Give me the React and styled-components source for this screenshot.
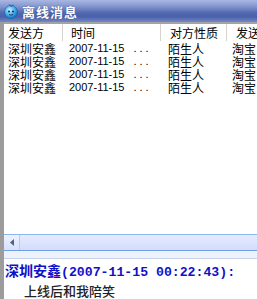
import styled, { createGlobalStyle } from 'styled-components';

const GlobalStyle = createGlobalStyle`
  *, *::before, *::after {
    box-sizing: border-box;
  }
  html, body {
    margin: 0;
    padding: 0;
    background: #fff;
  }
  body {
    font-family: "Noto Sans CJK SC", "Liberation Sans", sans-serif;
  }
`;

const Janela = styled.div`
  width: 257px;
  height: 299px;
  display: flex;
  flex-direction: column;
  overflow: hidden;
  background: #fff;
`;

const BarraTitulo = styled.div`
  height: 22px;
  flex: none;
  display: flex;
  align-items: center;
  gap: 3px;
  padding-left: 3px;
  background: linear-gradient(#a9b7e2 0%, #8597d0 28%, #5269b1 58%, #4961aa 76%, #7587c6 100%);
`;

const TextoTitulo = styled.span`
  color: #fff;
  font-size: 13px;
  font-weight: 700;
  letter-spacing: 1px;
  text-shadow: 0 0 1px #2a3a70;
`;

const Corpo = styled.div`
  flex: 1;
  display: flex;
  flex-direction: column;
  border-left: 4px solid #9c9c9c;
  background: #fff;
  min-height: 0;
`;

const Lista = styled.div`
  flex: 1;
  display: flex;
  flex-direction: column;
  border-top: 2px solid #a3a3a3;
  min-height: 0;
`;

const Linha = styled.div`
  display: grid;
  grid-template-columns: 59px 98px 66px 60px;
  height: ${(p) => (p.$cabecalho ? '17px' : '13px')};
  align-items: center;
  line-height: 13px;
  color: #000;
  white-space: nowrap;
  margin-bottom: ${(p) => (p.$cabecalho ? '1px' : '0')};
`;

const Celula = styled.div`
  padding-left: ${(p) => p.$recuo}px;
  overflow: hidden;
  border-right: ${(p) => (p.$cabecalho ? '1px solid #d6d3ce' : 'none')};
  height: 100%;
  display: flex;
  align-items: center;
  font-family: ${(p) => (p.$numeros ? '"Liberation Sans", sans-serif' : 'inherit')};
  font-size: ${(p) => (p.$numeros ? '11px' : '12px')};
`;

const Reticencias = styled.span`
  margin-left: 9px;
  letter-spacing: 3px;
`;

const EspacoLista = styled.div`
  flex: 1;
`;

const BarraRolagem = styled.div`
  height: 17px;
  flex: none;
  display: flex;
  border-top: 1px solid #8cb4f2;
  border-bottom: 1px solid #6f9fe8;
  background: linear-gradient(#e6ebfd, #d3dcfb);
`;

const BotaoSeta = styled.div`
  width: 16px;
  display: flex;
  align-items: center;
  justify-content: center;
  border-right: 1px solid #b9cbf5;
  background: linear-gradient(#eef2fe, #d8e1fb);
`;

const Divisor = styled.div`
  height: 8px;
  flex: none;
  background: #edf2fc;
  border-bottom: 1px solid #c8d4ec;
`;

const AreaMensagem = styled.div`
  height: 40px;
  flex: none;
  padding: 3px 0 0 1px;
`;

const Remetente = styled.div`
  color: #1010c8;
  font-size: 14px;
  font-weight: 700;
  line-height: 16px;
  white-space: nowrap;
`;

const Data = styled.span`
  font-family: "Liberation Mono", monospace;
  font-size: 13.2px;
`;

const Conteudo = styled.div`
  color: #222;
  font-size: 13px;
  line-height: 19px;
  padding-left: 19px;
  font-weight: 500;
`;

const IconeQQ = () => (
  <svg width="16" height="16" viewBox="0 0 16 16">
    <defs>
      <radialGradient id="bolha" cx="40%" cy="35%" r="70%">
        <stop offset="0" stopColor="#c8f0ff" />
        <stop offset="0.6" stopColor="#3aa8e8" />
        <stop offset="1" stopColor="#1466b4" />
      </radialGradient>
    </defs>
    <circle cx="8" cy="9" r="6.5" fill="url(#bolha)" stroke="#1a5e9c" strokeWidth="0.6" />
    <path d="M6 1.5 Q8 3 8 3.5 Q9 2.5 10.5 2" stroke="#1a5e9c" strokeWidth="1" fill="none" />
    <circle cx="6" cy="8.5" r="1" fill="#0a2a5a" />
    <circle cx="10" cy="8.5" r="1" fill="#0a2a5a" />
    <path d="M6 11.5 Q8 12.8 10 11.5" stroke="#0a2a5a" strokeWidth="0.8" fill="none" />
  </svg>
);

const registros = [
  { remetente: '深圳安鑫', tempo: '2007-11-15', natureza: '陌生人', origem: '淘宝' },
  { remetente: '深圳安鑫', tempo: '2007-11-15', natureza: '陌生人', origem: '淘宝' },
  { remetente: '深圳安鑫', tempo: '2007-11-15', natureza: '陌生人', origem: '淘宝' },
  { remetente: '深圳安鑫', tempo: '2007-11-15', natureza: '陌生人', origem: '淘宝' },
];

const App = () => (
  <>
    <GlobalStyle />
    <Janela>
      <BarraTitulo>
        <IconeQQ />
        <TextoTitulo>离线消息</TextoTitulo>
      </BarraTitulo>
      <Corpo>
        <Lista>
          <Linha $cabecalho>
            <Celula $cabecalho $recuo={4}>发送方</Celula>
            <Celula $cabecalho $recuo={8}>时间</Celula>
            <Celula $cabecalho $recuo={9}>对方性质</Celula>
            <Celula $cabecalho $recuo={9}>发送</Celula>
          </Linha>
          {registros.map((r, i) => (
            // eslint-disable-next-line react/no-array-index-key
            <Linha key={i}>
              <Celula $recuo={4}>{r.remetente}</Celula>
              <Celula $numeros $recuo={6}>
                {r.tempo}
                <Reticencias>...</Reticencias>
              </Celula>
              <Celula $recuo={7}>{r.natureza}</Celula>
              <Celula $recuo={5}>{r.origem}</Celula>
            </Linha>
          ))}
          <EspacoLista />
          <BarraRolagem>
            <BotaoSeta>
              <svg width="4" height="7" viewBox="0 0 4 7">
                <path d="M4 0 L0 3.5 L4 7 Z" fill="#4d6185" />
              </svg>
            </BotaoSeta>
          </BarraRolagem>
        </Lista>
        <Divisor />
        <AreaMensagem>
          <Remetente>
            深圳安鑫<Data>(2007-11-15 00:22:43):</Data>
          </Remetente>
          <Conteudo>上线后和我陪笑</Conteudo>
        </AreaMensagem>
      </Corpo>
    </Janela>
  </>
);

export default App;
